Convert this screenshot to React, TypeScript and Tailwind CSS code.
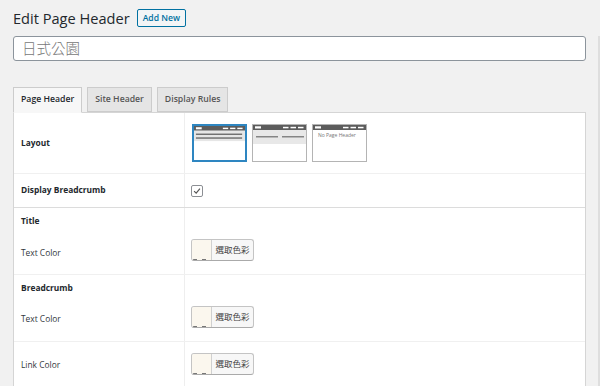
const font = { fontFamily: '"Open Sans", "Noto Sans CJK TC", sans-serif' };

function LayoutThumb({ variant, selected }: { variant: 1 | 2 | 3; selected?: boolean }) {
  return (
    <div
      className={`w-[55px] h-[38px] bg-white ${
        selected ? 'border-2 border-[#2e86c1]' : 'border border-[#b4b4b4]'
      }`}
    >
      <svg viewBox="0 0 53 36" preserveAspectRatio="none" className="w-full h-full block">
        <rect x="0" y="0" width="53" height="5" fill="#5c5c5c" />
        <rect x="2" y="1.3" width="6" height="2.2" fill="#fff" />
        <rect x="30" y="1.8" width="5.5" height="1.5" fill="#fff" />
        <rect x="37.5" y="1.8" width="5.5" height="1.5" fill="#fff" />
        <rect x="45" y="1.8" width="5.5" height="1.5" fill="#fff" />
        {variant === 1 && (
          <g>
            <rect x="0" y="5" width="53" height="11" fill="#e6e6e6" />
            <rect x="2" y="8" width="48" height="1.5" fill="#6e6e6e" />
            <rect x="2" y="12" width="48" height="1.5" fill="#6e6e6e" />
          </g>
        )}
        {variant === 2 && (
          <g>
            <rect x="0" y="5" width="53" height="14" fill="#e8e8e8" />
            <rect x="3" y="11" width="22" height="1.5" fill="#858585" />
            <rect x="29" y="11" width="22" height="1.5" fill="#858585" />
          </g>
        )}
        {variant === 3 && (
          <text x="5" y="12" fontSize="5" fill="#777" fontFamily="Open Sans, sans-serif">
            No Page Header
          </text>
        )}
      </svg>
    </div>
  );
}

function ColorButton() {
  return (
    <div className="flex h-[22px] w-[63px] rounded-[3px] border border-[#c4c4c4] border-b-[#aaa] overflow-hidden bg-[#f7f7f7]">
      <div className="relative w-[20px] h-full bg-[#fbf7ee] border-r border-[#d0d0d0]">
        <span className="absolute bottom-0 left-[1px] w-[4px] h-px bg-[#777]" />
        <span className="absolute bottom-0 left-[10px] w-[4px] h-px bg-[#777]" />
      </div>
      <div className="flex-1 flex items-center justify-center text-[8.5px] text-[#444]">選取色彩</div>
    </div>
  );
}

export default function App() {
  return (
    <div className="w-[600px] h-[386px] overflow-hidden bg-[#f1f1f1] pl-[13px]" style={font}>
      <div className="flex items-center gap-[7px] pt-[9px] h-[27px]">
        <h1 className="text-[14.6px] leading-none text-[#23282d] font-normal">Edit Page Header</h1>
        <button className="h-[18px] px-[5px] rounded-[2px] border border-[#0071a1] bg-[#f3f5f6] text-[8.6px] font-semibold text-[#0071a1] leading-none">
          Add New
        </button>
      </div>
      <div className="flex mt-[9px]">
        <div className="w-[573px] shrink-0">
          <div className="h-[25px] bg-white border border-[#8c949c] rounded-[3px] flex items-center pl-[8px] text-[14.5px] font-light text-[#777]">
            日式公園
          </div>

          <div className="flex gap-[5px] mt-[26px] relative z-10 -mb-px">
            <div className="h-[26px] px-[7px] flex items-center border border-[#ccc] border-b-[#f7f7f7] bg-[#f7f7f7] text-[8.7px] font-semibold text-[#23282d]">
              Page Header
            </div>
            <div className="h-[25px] px-[7px] flex items-center border border-[#ccc] bg-[#e5e5e5] text-[8.7px] font-semibold text-[#555]">
              Site Header
            </div>
            <div className="h-[25px] px-[7px] flex items-center border border-[#ccc] bg-[#e5e5e5] text-[8.7px] font-semibold text-[#555]">
              Display Rules
            </div>
          </div>

          <div className="bg-white border border-[#d5d5d5] text-[8.4px] text-[#32373c]">
            <div className="grid grid-cols-[171px_1fr] h-[61px] border-b border-[#f0f0f0]">
              <div className="flex items-center pl-[7px] font-bold text-[#23282d] border-r border-[#eee]">Layout</div>
              <div className="flex items-center gap-[5px] pl-[7px]">
                <LayoutThumb variant={1} selected />
                <LayoutThumb variant={2} />
                <LayoutThumb variant={3} />
              </div>
            </div>
            <div className="grid grid-cols-[171px_1fr] h-[34px] border-b border-[#dcdcdc]">
              <div className="flex items-center pl-[7px] font-bold text-[#23282d] border-r border-[#eee]">
                Display Breadcrumb
              </div>
              <div className="flex items-center pl-[6px]">
                <div className="w-[12px] h-[12px] rounded-[2px] border border-[#8c8f94] flex items-center justify-center">
                  <svg viewBox="0 0 12 12" className="w-[10px] h-[10px]">
                    <path d="M2.5 6.2 L5 8.6 L9.5 3.2" fill="none" stroke="#555" strokeWidth="1.4" />
                  </svg>
                </div>
              </div>
            </div>
            <div className="grid grid-cols-[171px_1fr] h-[67px] border-b border-[#f0f0f0]">
              <div className="flex flex-col pl-[7px] border-r border-[#eee]">
                <div className="font-bold text-[#23282d] mt-[7px]">Title</div>
                <div className="mt-[19px]">Text Color</div>
              </div>
              <div className="pl-[6px] pt-[31px]">
                <ColorButton />
              </div>
            </div>
            <div className="grid grid-cols-[171px_1fr] h-[67px] border-b border-[#f0f0f0]">
              <div className="flex flex-col pl-[7px] border-r border-[#eee]">
                <div className="font-bold text-[#23282d] mt-[7px]">Breadcrumb</div>
                <div className="mt-[18px]">Text Color</div>
              </div>
              <div className="pl-[6px] pt-[31px]">
                <ColorButton />
              </div>
            </div>
            <div className="grid grid-cols-[171px_1fr] h-[60px]">
              <div className="flex pl-[7px] pt-[17px] border-r border-[#eee]">Link Color</div>
              <div className="pl-[6px] pt-[11px]">
                <ColorButton />
              </div>
            </div>
          </div>
        </div>
        <div className="ml-[12px] w-[2px] h-[360px] bg-[#dedede]" />
      </div>
    </div>
  );
}
